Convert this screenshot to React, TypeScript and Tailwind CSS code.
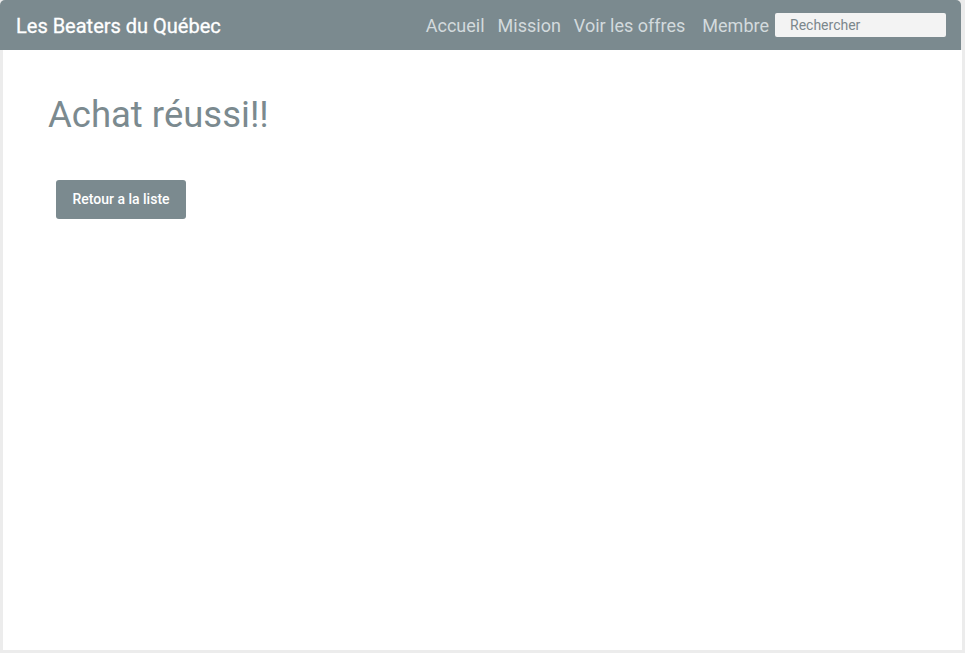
export default function App() {
  return (
    <div className="flex h-[653px] w-[965px] flex-col bg-[#ececec] font-['Roboto',sans-serif]">
      <nav className="flex h-[50px] w-[961px] shrink-0 items-center rounded-t-[5px] bg-[#7b8a8f] pl-4 pr-[15px]">
        <a href="#" className="mt-[2px] text-[20px] leading-none text-white [-webkit-text-stroke:0.3px_white]">
          Les Beaters du Québec
        </a>
        <div className="ml-auto flex items-center text-[18px] leading-none text-[#d3dadd]">
          <a href="#" className="mt-[2px]">Accueil</a>
          <a href="#" className="ml-[13px] mt-[2px]">Mission</a>
          <a href="#" className="ml-[13px] mt-[2px]">Voir les offres</a>
          <a href="#" className="ml-[17px] mt-[2px]">Membre</a>
          <input
            type="text"
            placeholder="Rechercher"
            className="ml-[6px] h-[24px] w-[171px] rounded-[2px] bg-[#f3f3f3] px-[15px] text-[14px] text-[#555] outline-none placeholder:text-[#7b878c]"
          />
        </div>
      </nav>
      <main className="mb-[3px] ml-[3px] w-[959px] flex-1 bg-white px-[45px] pt-[44px]">
        <h1 className="text-[36.5px] font-normal leading-[42px] text-[#7b8a8f]">Achat réussi!!</h1>
        <button className="ml-2 mt-[44px] h-[39px] w-[130px] rounded-[3px] bg-[#7b8a8f] text-[14px] font-medium text-white">
          Retour a la liste
        </button>
      </main>
    </div>
  );
}
